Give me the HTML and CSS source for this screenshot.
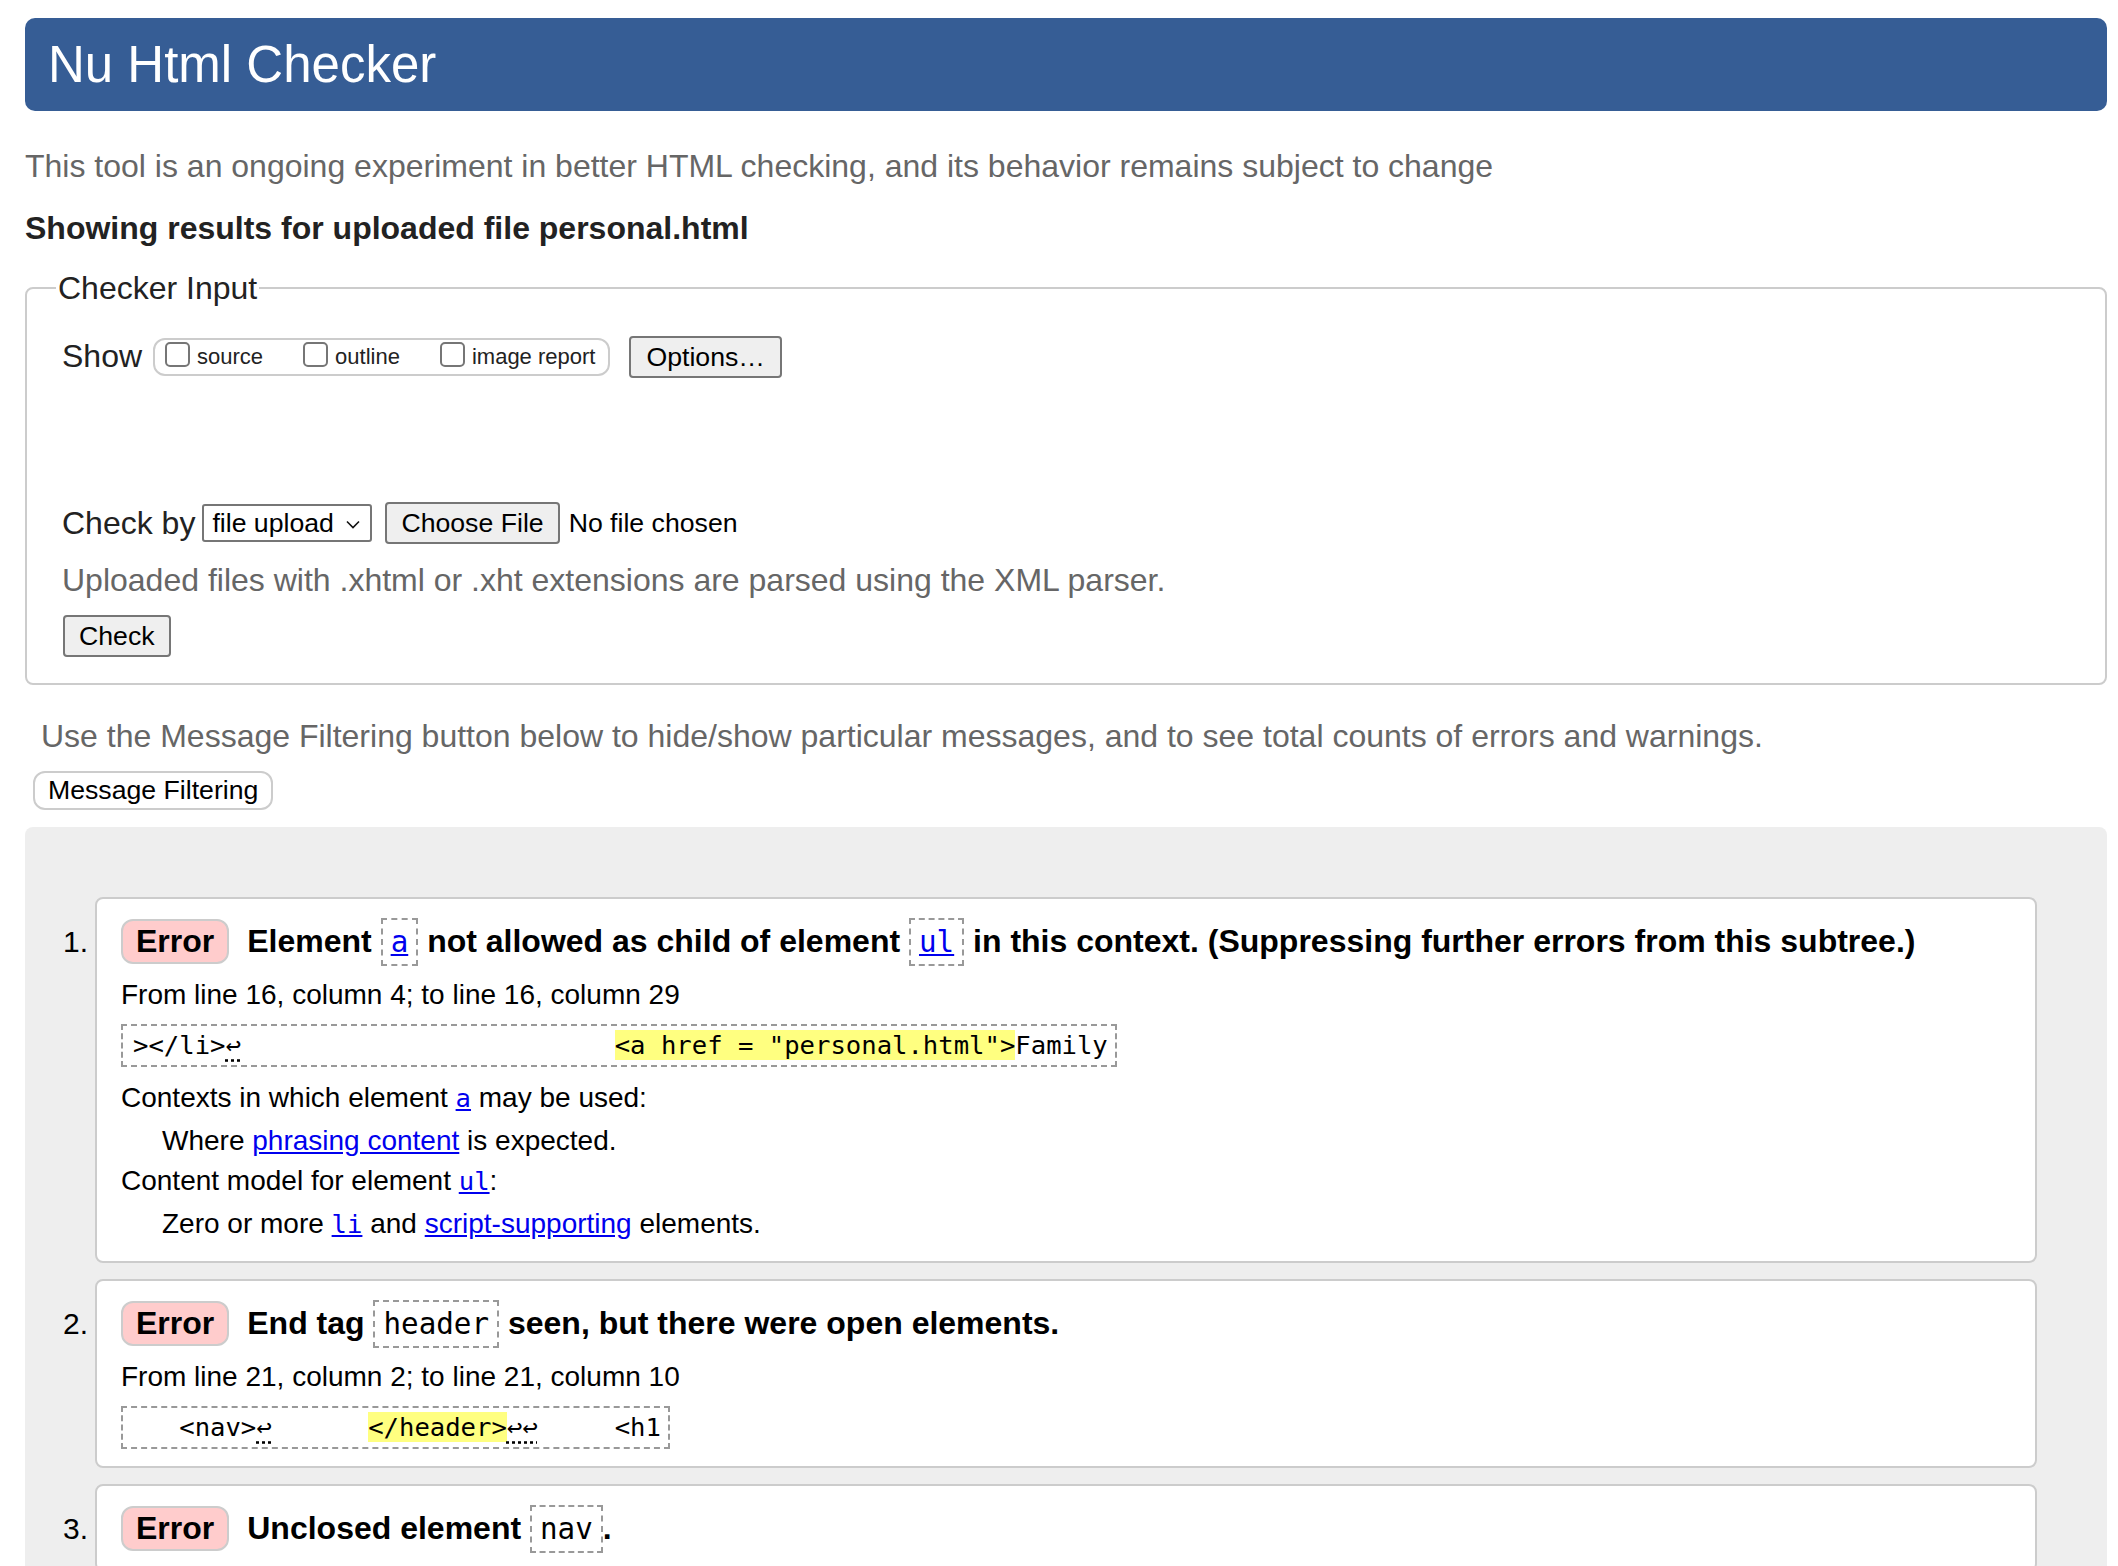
FILE: index.html
```html
<!DOCTYPE html>
<html lang="en">
<head>
<meta charset="utf-8">
<title>Nu Html Checker</title>
<link rel="stylesheet" href="styles.css">
</head>
<body>
<h1 class="title">Nu Html Checker</h1>
<p class="intro">This tool is an ongoing experiment in better HTML checking, and its behavior remains subject to change</p>
<p class="showing">Showing results for uploaded file personal.html</p>

<fieldset class="checker">
  <legend>Checker Input</legend>
  <div class="row show-row">
    <span class="lbl">Show</span>
    <span class="opts">
      <label class="opt"><input type="checkbox" class="box">source</label>
      <label class="opt"><input type="checkbox" class="box">outline</label>
      <label class="opt"><input type="checkbox" class="box">image report</label>
    </span>
    <button class="btn opt-btn" type="button">Options…</button>
  </div>
  <div class="options-panel"></div>
  <div class="row check-row">
    <span class="lbl">Check by</span>
    <span class="select">file upload<svg class="chev" width="14" height="9" viewBox="0 0 14 9"><polyline points="1,1.5 7,7.5 13,1.5" fill="none" stroke="#111" stroke-width="1.6"/></svg></span>
    <button class="btn file-btn" type="button">Choose File</button>
    <span class="nofile">No file chosen</span>
  </div>
  <p class="hint">Uploaded files with .xhtml or .xht extensions are parsed using the XML parser.</p>
  <button class="btn check-btn" type="button">Check</button>
</fieldset>

<div class="filter">
  <p class="filter-note">Use the Message Filtering button below to hide/show particular messages, and to see total counts of errors and warnings.</p>
  <button class="filter-btn" type="button">Message Filtering</button>
</div>

<ol class="messages">
  <li class="msg">
    <div class="card">
      <p class="msg-head"><strong class="badge">Error</strong><span>Element <code class="inl"><a href="#">a</a></code> not allowed as child of element <code class="inl"><a href="#">ul</a></code> in this context. (Suppressing further errors from this subtree.)</span></p>
      <p class="loc">From line 16, column 4; to line 16, column 29</p>
      <code class="extract">&gt;&lt;/li&gt;<span class="lf">↩</span>                        <mark>&lt;a href = "personal.html"&gt;</mark>Family</code>
      <dl class="details">
        <dt>Contexts in which element <a href="#"><code>a</code></a> may be used:</dt>
        <dd>Where <a href="#">phrasing content</a> is expected.</dd>
        <dt>Content model for element <a href="#"><code>ul</code></a>:</dt>
        <dd>Zero or more <a href="#"><code>li</code></a> and <a href="#">script-supporting</a> elements.</dd>
      </dl>
    </div>
  </li>
  <li class="msg">
    <div class="card">
      <p class="msg-head"><strong class="badge">Error</strong><span>End tag <code class="inl">header</code> seen, but there were open elements.</span></p>
      <p class="loc">From line 21, column 2; to line 21, column 10</p>
      <code class="extract">   &lt;nav&gt;<span class="lf">↩</span>      <mark>&lt;/header&gt;</mark><span class="lf lf-tight">↩↩</span>     &lt;h1</code>
    </div>
  </li>
  <li class="msg">
    <div class="card">
      <p class="msg-head"><strong class="badge">Error</strong><span>Unclosed element <code class="inl">nav</code>.</span></p>
    </div>
  </li>
</ol>
</body>
</html>
```

FILE: styles.css
```css
html {
  overflow: hidden;
}

body {
  margin: 0;
  padding: 18px 11px 0 25px;
  font-family: "Liberation Sans", Arial, Helvetica, sans-serif;
  font-size: 32px;
  color: #000;
  background: #fff;
}

a {
  color: #00e;
}

.title {
  margin: 0;
  height: 93px;
  line-height: 93px;
  padding: 0 23px;
  background: #365d95;
  color: #fff;
  font-size: 51px;
  font-weight: normal;
  border-radius: 10px;
}

.intro {
  margin: 35px 0 0;
  line-height: 40px;
  color: #666;
}

.showing {
  margin: 22px 0 0;
  line-height: 40px;
  font-weight: bold;
  color: #222;
}

.checker {
  margin: 20px 0 0;
  border: 2px solid #ccc;
  border-radius: 8px;
  padding: 27px 30px 26px 35px;
  min-width: 0;
}

.checker legend {
  font-size: 32px;
  line-height: 40px;
  padding: 0 2px;
  margin-left: -6px;
  color: #222;
}

.row {
  display: flex;
  align-items: center;
}

.lbl {
  color: #222;
}

.show-row {
  height: 43px;
}

.opts {
  display: flex;
  align-items: center;
  height: 34px;
  margin-left: 11px;
  padding: 0 13px 0 10px;
  border: 2px solid #ccc;
  border-radius: 12px;
  font-size: 22px;
  color: #222;
}

.opt {
  display: flex;
  align-items: center;
}

.opt + .opt {
  margin-left: 40px;
}

.box {
  appearance: none;
  -webkit-appearance: none;
  width: 25px;
  height: 25px;
  box-sizing: border-box;
  margin: 0 7px 5px 0;
  border: 2px solid #767676;
  border-radius: 5px;
  background: #fff;
}

.btn {
  font-family: "Liberation Sans", Arial, sans-serif;
  font-size: 26.67px;
  line-height: 30px;
  padding: 4px 14px;
  border: 2px solid #767676;
  border-radius: 4px;
  background: #efefef;
  color: #000;
}

.opt-btn {
  margin-left: 19px;
  padding: 4px 15px;
}

.options-panel {
  height: 123px;
}

.check-row {
  height: 44px;
}

.select {
  display: flex;
  align-items: center;
  justify-content: space-between;
  box-sizing: border-box;
  width: 170px;
  height: 38px;
  margin-left: 7px;
  padding: 0 10px 0 8px;
  border: 2px solid #767676;
  border-radius: 3px;
  background: #fff;
  font-size: 26.67px;
  color: #000;
}

.chev {
  margin-top: 2px;
}

.file-btn {
  margin-left: 13px;
}

.nofile {
  margin-left: 9px;
  font-size: 26.67px;
}

.hint {
  margin: 15px 0 0;
  line-height: 40px;
  color: #666;
}

.check-btn {
  display: block;
  margin-top: 15px;
  margin-left: 1px;
  padding: 4px 14px;
}

.filter {
  margin-top: 31px;
}

.filter-note {
  margin: 0;
  padding-left: 16px;
  line-height: 40px;
  color: #666;
}

.filter-btn {
  display: block;
  margin: 15px 0 0 8px;
  font-family: "Liberation Sans", Arial, sans-serif;
  font-size: 26.67px;
  line-height: 35px;
  padding: 0 13px;
  border: 2px solid #ccc;
  border-radius: 12px;
  background: #fff;
  color: #000;
}

.messages {
  list-style: none;
  margin: 17px 0 0;
  padding: 70px 70px 40px 0;
  background: #eee;
  border-radius: 8px;
  counter-reset: msg;
}

.msg {
  display: flex;
  align-items: baseline;
  margin-bottom: 16px;
  counter-increment: msg;
}

.msg::before {
  content: counter(msg) ".";
  flex: 0 0 70px;
  box-sizing: border-box;
  padding-right: 7px;
  text-align: right;
  font-size: 30px;
}

.card {
  flex: 1;
  min-width: 0;
  background: #fff;
  border: 2px solid #ccc;
  border-radius: 8px;
  padding: 18px 24px 17px;
}

.msg-head {
  margin: 0;
  font-size: 32px;
  font-weight: bold;
  line-height: 48px;
}

.badge {
  display: inline-block;
  line-height: 41px;
  padding: 0 13px;
  margin-right: 18px;
  background: #fcc;
  border: 2px solid #ccc;
  border-radius: 12px;
}

code {
  font-family: "DejaVu Sans Mono", "Liberation Mono", monospace;
  font-size: 0.914em;
}

.inl {
  display: inline-block;
  font-weight: normal;
  line-height: 44px;
  padding: 0 8px;
  border: 2px dashed #999;
}

.loc {
  margin: 9px 0 0;
  font-size: 28px;
  line-height: 40px;
}

.extract {
  display: block;
  width: fit-content;
  margin-top: 9px;
  padding: 0 7px 0 10px;
  border: 2px dashed #999;
  font-size: 25.6px;
  line-height: 39px;
  white-space: pre;
}

mark {
  background: #ffff80;
  color: inherit;
}

.lf {
  margin-right: 4px;
  text-decoration: underline dotted;
  text-underline-offset: 5px;
}

.lf-tight {
  margin-right: 0;
}

.details {
  margin: 11px 0 0;
  font-size: 28px;
  line-height: 40px;
}

.details dd {
  margin: 3px 0 0 41px;
}
```
